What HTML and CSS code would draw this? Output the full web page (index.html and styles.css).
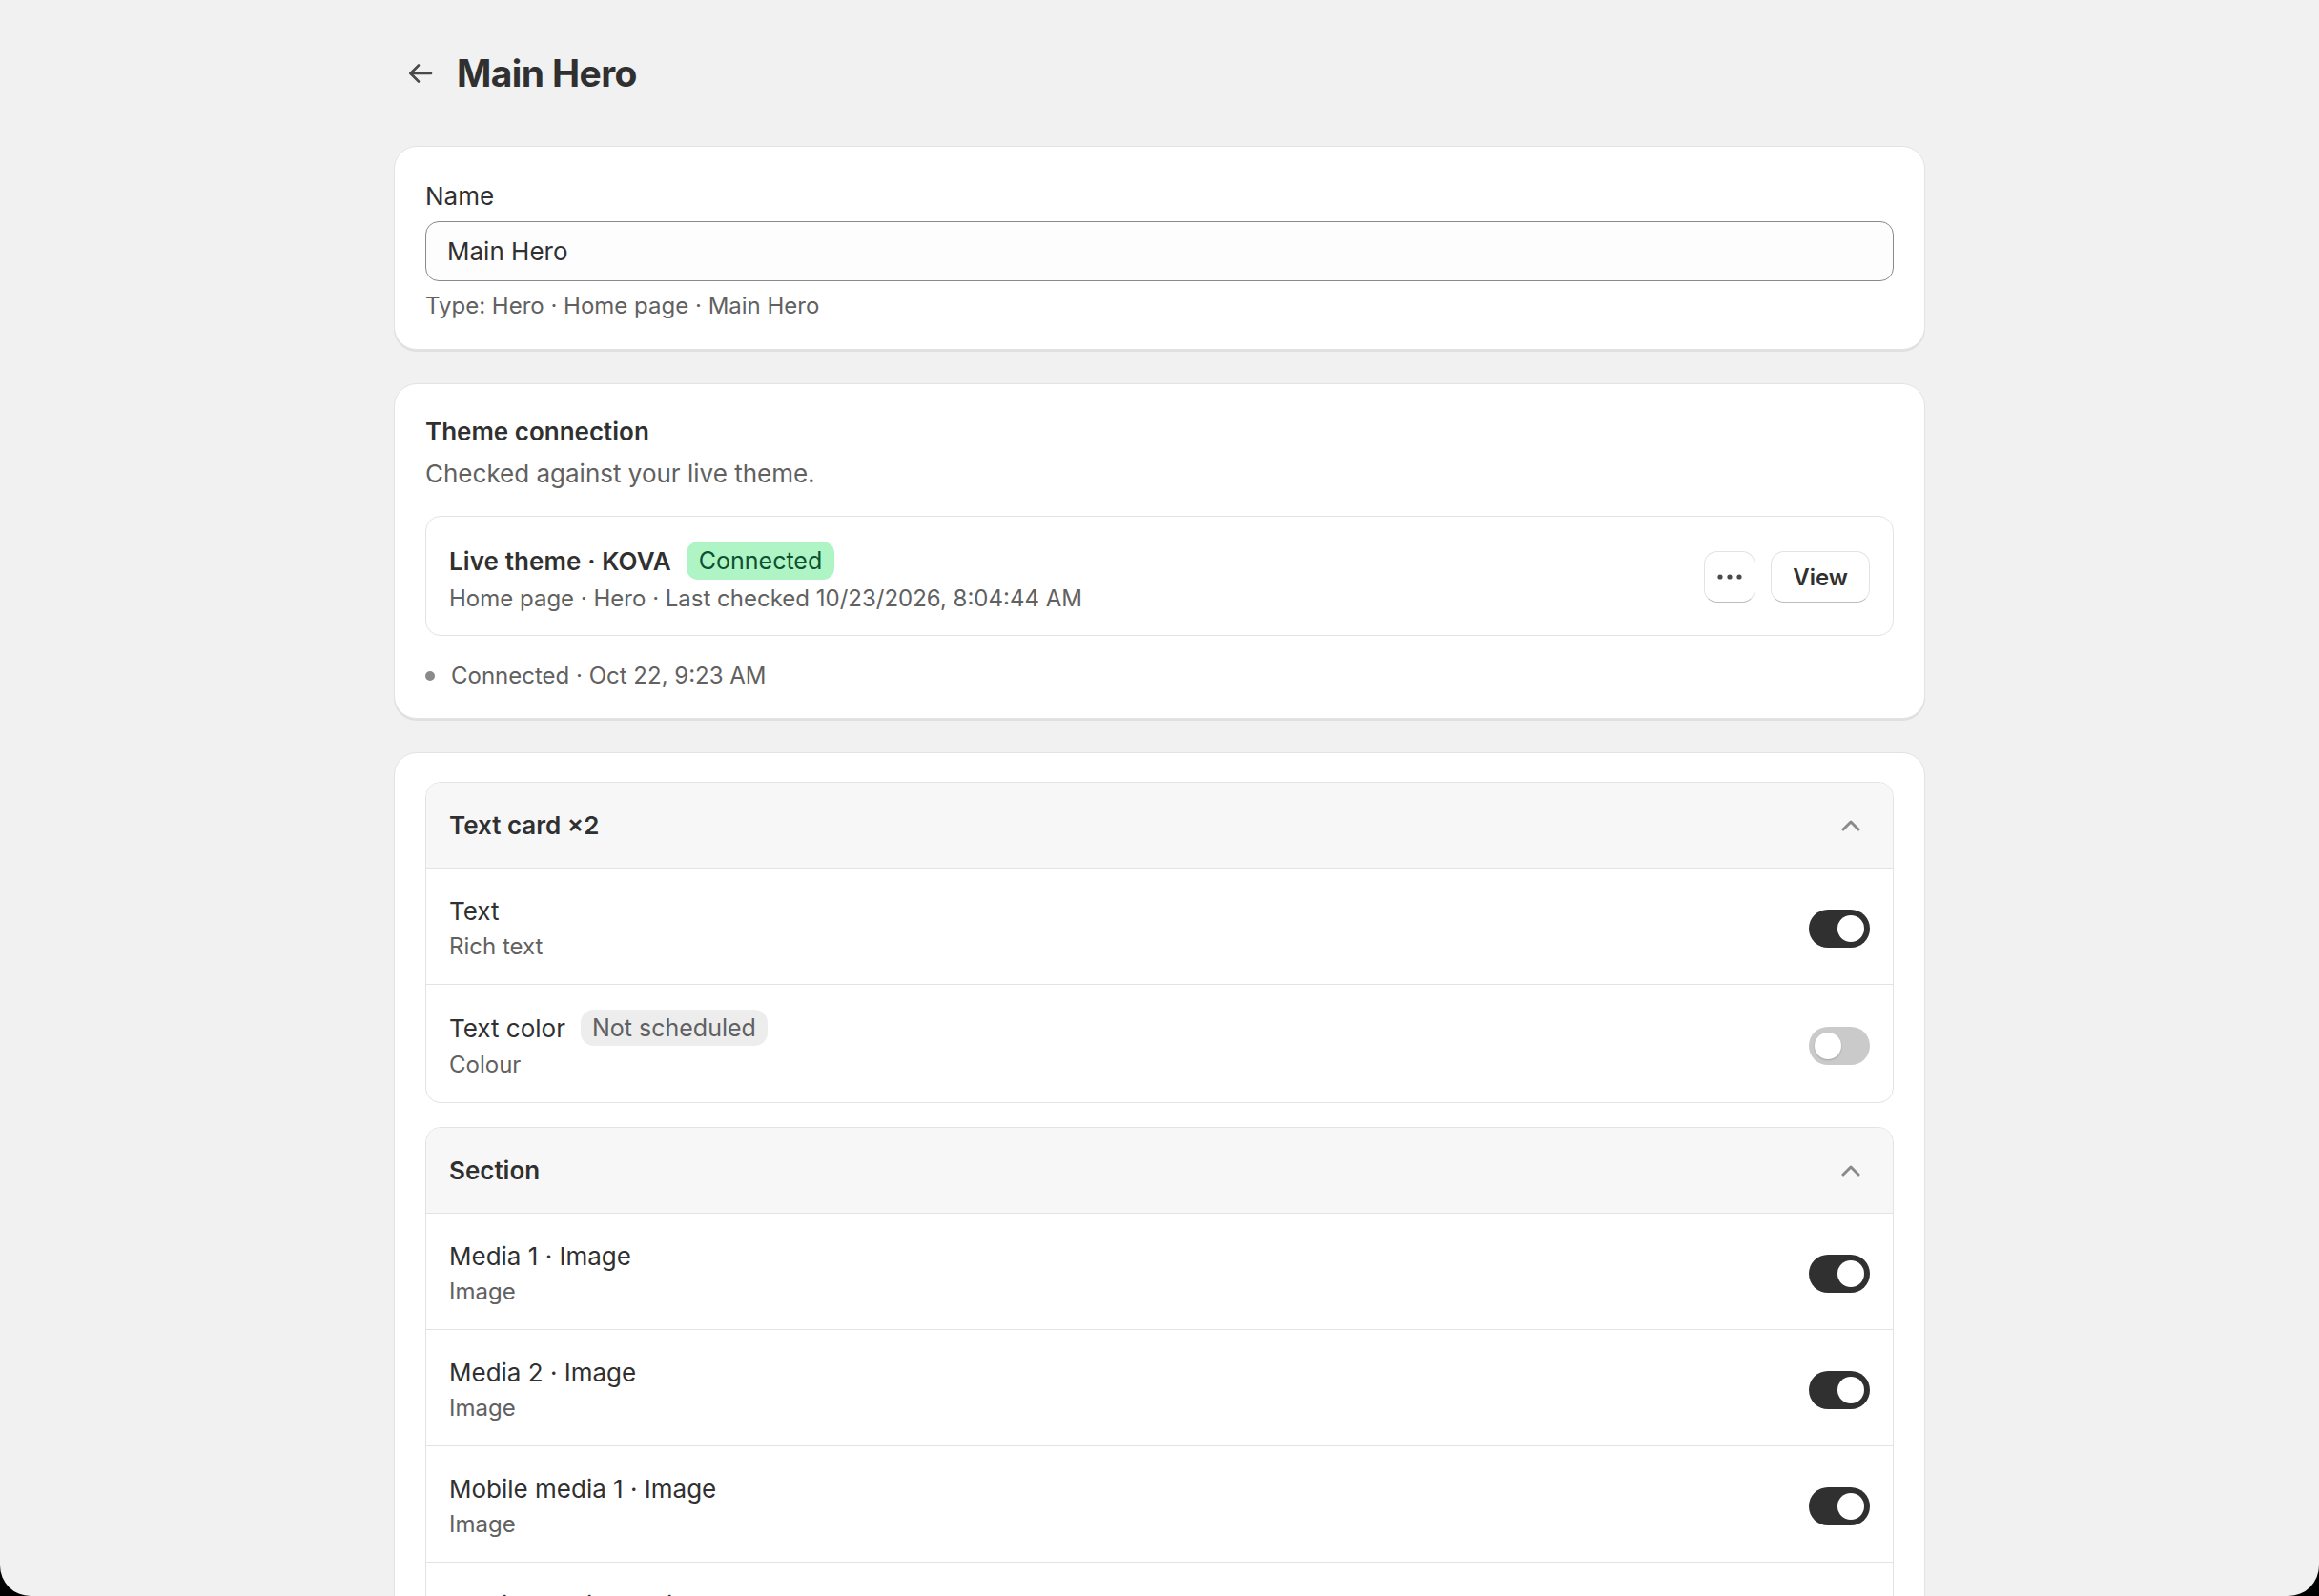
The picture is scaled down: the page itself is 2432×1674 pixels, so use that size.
FILE: index.html
```html
<!DOCTYPE html>
<html lang="en">
<head>
    <meta charset="UTF-8">
    <meta name="viewport" content="width=device-width, initial-scale=1.0">
    <title>Main Hero</title>
    <link rel="stylesheet" href="styles.css">
</head>
<body>
    <div class="page">
        <header class="page-header">
            <button class="back-btn" aria-label="Back">
                <svg width="26" height="22" viewBox="0 0 26 22" fill="none" stroke="#4a4a4a" stroke-width="2.6" stroke-linecap="round" stroke-linejoin="round">
                    <path d="M24 11H2.5"/>
                    <path d="M11 2.5L2.5 11L11 19.5"/>
                </svg>
            </button>
            <h1>Main Hero</h1>
        </header>

        <!-- Name -->
        <section class="card card-name">
            <label class="field-label" for="name">Name</label>
            <input id="name" class="text-input" type="text" value="Main Hero">
            <p class="help-text">Type: Hero · Home page · Main Hero</p>
        </section>

        <!-- Theme connection -->
        <section class="card card-theme">
            <h2 class="card-title">Theme connection</h2>
            <p class="card-sub">Checked against your live theme.</p>

            <div class="theme-box">
                <div class="theme-info">
                    <div class="theme-name">Live theme · KOVA <span class="badge badge-success">Connected</span></div>
                    <div class="theme-meta">Home page · Hero · Last checked 10/23/2026, 8:04:44 AM</div>
                </div>
                <div class="theme-actions">
                    <button class="btn btn-icon" aria-label="More actions">
                        <svg width="26" height="6" viewBox="0 0 26 6" fill="#4a4a4a">
                            <circle cx="3" cy="3" r="2.6"/>
                            <circle cx="13" cy="3" r="2.6"/>
                            <circle cx="23" cy="3" r="2.6"/>
                        </svg>
                    </button>
                    <button class="btn">View</button>
                </div>
            </div>

            <div class="status"><span class="status-dot"></span>Connected · Oct 22, 9:23 AM</div>
        </section>

        <!-- Settings -->
        <section class="card card-settings">
            <div class="group">
                <div class="group-header">
                    <span>Text card ×2</span>
                    <svg class="chevron" width="20" height="12" viewBox="0 0 20 12" fill="none" stroke="#8a8a8a" stroke-width="3" stroke-linecap="round" stroke-linejoin="round">
                        <path d="M2 10L10 2L18 10"/>
                    </svg>
                </div>
                <div class="setting-row">
                    <div class="setting-text">
                        <div class="setting-name">Text</div>
                        <div class="setting-type">Rich text</div>
                    </div>
                    <span class="toggle on"><span class="knob"></span></span>
                </div>
                <div class="setting-row">
                    <div class="setting-text">
                        <div class="setting-name">Text color <span class="badge badge-muted">Not scheduled</span></div>
                        <div class="setting-type">Colour</div>
                    </div>
                    <span class="toggle"><span class="knob"></span></span>
                </div>
            </div>

            <div class="group">
                <div class="group-header">
                    <span>Section</span>
                    <svg class="chevron" width="20" height="12" viewBox="0 0 20 12" fill="none" stroke="#8a8a8a" stroke-width="3" stroke-linecap="round" stroke-linejoin="round">
                        <path d="M2 10L10 2L18 10"/>
                    </svg>
                </div>
                <div class="setting-row">
                    <div class="setting-text">
                        <div class="setting-name">Media 1 · Image</div>
                        <div class="setting-type">Image</div>
                    </div>
                    <span class="toggle on"><span class="knob"></span></span>
                </div>
                <div class="setting-row">
                    <div class="setting-text">
                        <div class="setting-name">Media 2 · Image</div>
                        <div class="setting-type">Image</div>
                    </div>
                    <span class="toggle on"><span class="knob"></span></span>
                </div>
                <div class="setting-row">
                    <div class="setting-text">
                        <div class="setting-name">Mobile media 1 · Image</div>
                        <div class="setting-type">Image</div>
                    </div>
                    <span class="toggle on"><span class="knob"></span></span>
                </div>
                <div class="setting-row">
                    <div class="setting-text">
                        <div class="setting-name">Mobile media 2 · Video</div>
                        <div class="setting-type">Video</div>
                    </div>
                    <span class="toggle on"><span class="knob"></span></span>
                </div>
            </div>
        </section>
    </div>
</body>
</html>
```

FILE: styles.css
```css
html {
    background: #000;
}
body {
    margin: 0;
    height: 100vh;
    overflow: hidden;
    background: #f1f1f1;
    border-radius: 0 0 32px 32px;
    font-family: Inter, "Noto Sans", sans-serif;
    font-size: 26px;
    color: #303030;
}
.page {
    max-width: 1606px;
    margin: 0 auto;
    padding-top: 53px;
}
.page-header {
    display: flex;
    align-items: center;
    gap: 25px;
    height: 48px;
    padding-left: 15px;
    margin-bottom: 52px;
}
.back-btn {
    display: flex;
    padding: 0;
    border: none;
    background: none;
    cursor: pointer;
}
h1 {
    margin: 0;
    font-size: 39px;
    line-height: 48px;
    font-weight: 700;
    letter-spacing: -0.6px;
}
.card {
    background: #fff;
    border: 1px solid #e3e3e3;
    border-radius: 24px;
    padding: 32px;
    margin-bottom: 35px;
    box-shadow: 0 2px 0 rgba(0, 0, 0, 0.07);
}
.card-name {
    padding-top: 34px;
    padding-bottom: 29px;
}
.card-theme {
    padding-top: 33px;
    padding-bottom: 28px;
}
.card-settings {
    padding-top: 30px;
}
.field-label {
    display: block;
    line-height: 36px;
}
.text-input {
    display: block;
    box-sizing: border-box;
    width: 100%;
    height: 63px;
    margin-top: 8px;
    padding: 0 22px;
    border: 1px solid #8a8a8a;
    border-radius: 14px;
    background: #fdfdfd;
    font: inherit;
    color: #303030;
    outline: none;
}
.help-text {
    margin: 10px 0 0;
    font-size: 24px;
    line-height: 32px;
    color: #616161;
}
.card-title {
    margin: 0;
    font-size: 26px;
    line-height: 34px;
    font-weight: 600;
}
.card-sub {
    margin: 9px 0 0;
    line-height: 36px;
    color: #616161;
}
.theme-box {
    display: flex;
    align-items: center;
    justify-content: space-between;
    margin-top: 26px;
    padding: 22px 24px 20px;
    border: 1px solid #e3e3e3;
    border-radius: 16px;
}
.theme-info {
    padding-top: 6px;
}
.theme-name {
    display: flex;
    align-items: center;
    gap: 16px;
    height: 36px;
    font-weight: 600;
    letter-spacing: 0.1px;
}
.theme-meta {
    margin-top: 4px;
    font-size: 24px;
    line-height: 36px;
    color: #616161;
}
.badge {
    display: inline-flex;
    align-items: center;
    height: 40px;
    padding: 0 13px;
    border-radius: 12px;
    font-size: 25px;
    font-weight: 400;
    letter-spacing: 0;
}
.badge-success {
    background: #aff4c5;
    color: #0c5132;
}
.badge-muted {
    height: 38px;
    padding: 0 12px;
    border-radius: 14px;
    background: #ededed;
    color: #616161;
}
.theme-actions {
    display: flex;
    gap: 16px;
}
.btn {
    height: 54px;
    padding: 0 22px;
    border: 1px solid #e3e3e3;
    border-bottom-color: #bcbcbc;
    border-radius: 14px;
    background: #fff;
    font: inherit;
    font-weight: 600;
    font-size: 24px;
    color: #303030;
    cursor: pointer;
}
.btn-icon {
    display: flex;
    align-items: center;
    justify-content: center;
    width: 54px;
    padding: 0;
}
.status {
    display: flex;
    align-items: center;
    gap: 17px;
    margin-top: 26px;
    font-size: 24px;
    line-height: 32px;
    color: #616161;
}
.status-dot {
    width: 10px;
    height: 10px;
    border-radius: 50%;
    background: #8a8a8a;
}
.group {
    border: 1px solid #e3e3e3;
    border-radius: 16px;
    overflow: hidden;
    margin-bottom: 25px;
}
.group-header {
    display: flex;
    align-items: center;
    justify-content: space-between;
    height: 89px;
    padding: 0 34px 0 24px;
    background: #f7f7f7;
    border-bottom: 1px solid #e3e3e3;
    font-weight: 600;
}
.setting-row {
    display: flex;
    align-items: center;
    justify-content: space-between;
    padding: 26px 24px 21px;
}
.setting-row + .setting-row {
    border-top: 1px solid #e3e3e3;
}
.setting-name {
    display: flex;
    align-items: center;
    gap: 16px;
    min-height: 36px;
}
.setting-type {
    margin-top: 2px;
    font-size: 24px;
    line-height: 36px;
    color: #616161;
}
.toggle {
    display: flex;
    justify-content: flex-start;
    box-sizing: border-box;
    width: 64px;
    height: 40px;
    padding: 6px;
    border-radius: 20px;
    background: #cacaca;
}
.toggle.on {
    justify-content: flex-end;
    background: #303030;
}
.knob {
    width: 28px;
    height: 28px;
    border-radius: 50%;
    background: #fff;
    box-shadow: 0 1px 2px rgba(0, 0, 0, 0.2);
}
.toggle.on .knob {
    box-shadow: none;
}
```
